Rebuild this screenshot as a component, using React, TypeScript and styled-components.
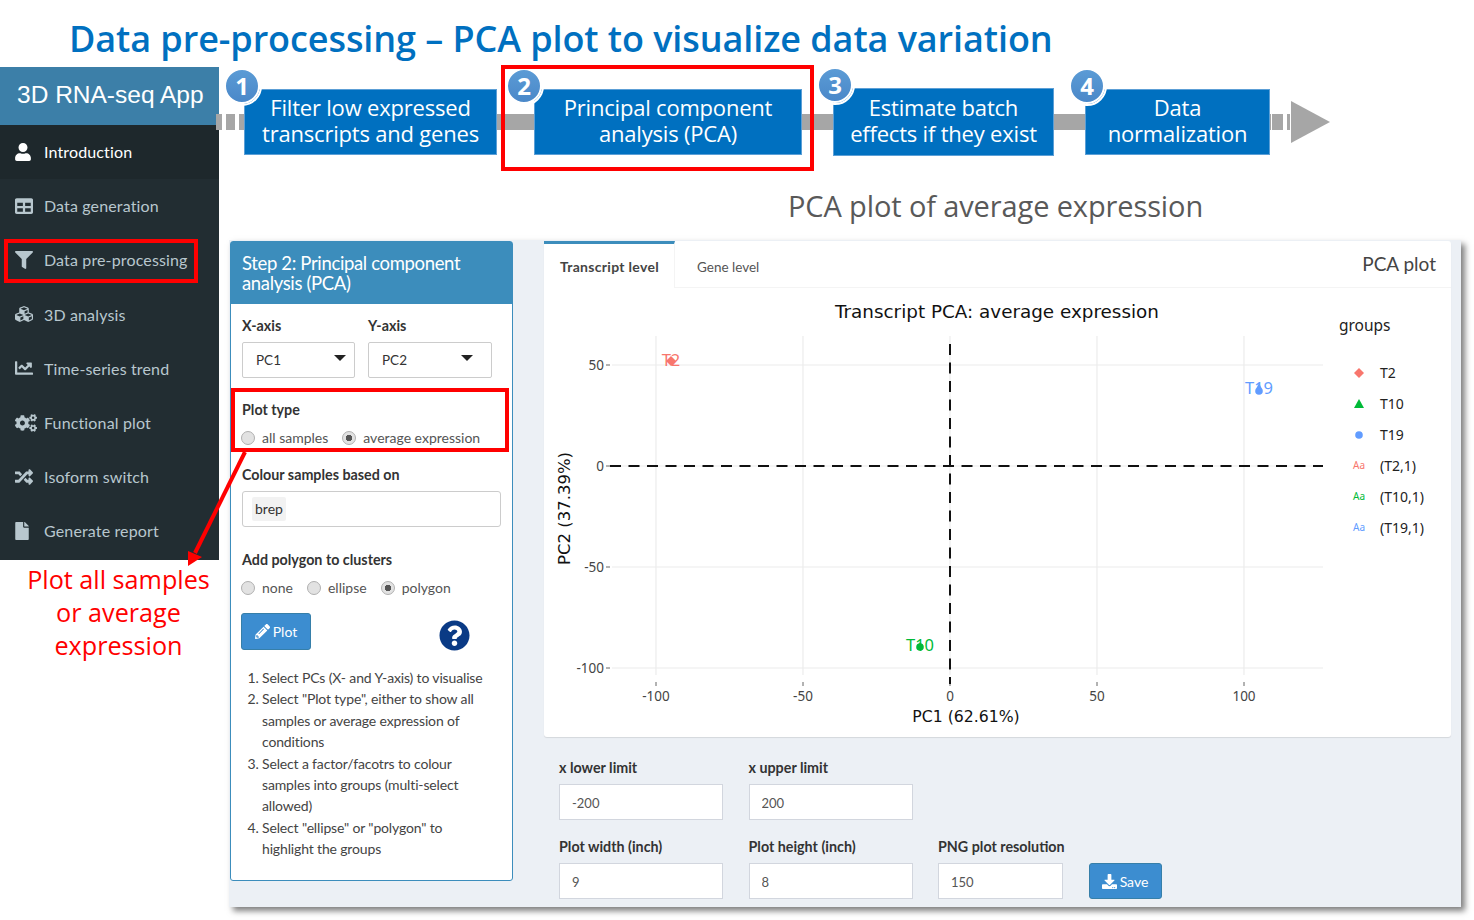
import React from "react";
import styled, { createGlobalStyle } from "styled-components";
import {
  FaChartLine,
  FaCogs,
  FaCubes,
  FaDownload,
  FaFile,
  FaFilter,
  FaPencilAlt,
  FaQuestionCircle,
  FaRandom,
  FaTable,
  FaUser,
} from "react-icons/fa";

const GlobalStyle = createGlobalStyle`
  html, body {
    margin: 0;
    padding: 0;
    background: #ffffff;
  }
  * {
    box-sizing: border-box;
  }
`;

const appFont = `"Lato", "Noto Sans", sans-serif`;
const slideFont = `"Open Sans", "Noto Sans", sans-serif`;
const plotFont = `"Noto Sans", "DejaVu Sans", sans-serif`;
const plotTitleFont = `"DejaVu Sans", "Noto Sans", sans-serif`;

const Page = styled.div`
  position: relative;
  width: 1474px;
  height: 920px;
  overflow: hidden;
  background: #ffffff;
  font-family: ${appFont};
`;

const Title = styled.h1`
  margin: 0;
  height: 67px;
  padding: 15px 0 0 69px;
  font-family: ${slideFont};
  font-size: 36px;
  line-height: 48px;
  font-weight: 600;
  letter-spacing: -0.08px;
  color: #0070c0;
  white-space: nowrap;
`;

const Main = styled.div`
  display: flex;
`;

const LeftColumn = styled.div`
  width: 219px;
  flex: none;
`;

const Sidebar = styled.nav`
  height: 493px;
  background: #222d32;
`;

const Brand = styled.div`
  height: 58px;
  padding-left: 17px;
  background: #3c7fa8;
  color: #ffffff;
  font-family: "Liberation Sans", Arial, sans-serif;
  font-size: 24.5px;
  line-height: 55px;
  white-space: nowrap;
`;

const NavItem = styled.div<{ $active?: boolean }>`
  display: flex;
  align-items: center;
  gap: 11px;
  height: 54.2px;
  padding: 0 0 1px 15px;
  font-size: 16px;
  letter-spacing: 0.14px;
  color: ${(p) => (p.$active ? "#ffffff" : "#b8c7ce")};
  background: ${(p) => (p.$active ? "#1e282c" : "transparent")};
  white-space: nowrap;
`;

const NavIcon = styled.span<{ $iconWidth: number }>`
  display: flex;
  width: 18px;
  flex: none;

  svg {
    width: ${(p) => p.$iconWidth}px;
    height: 18px;
    flex: none;
  }
`;

const Caption = styled.p`
  margin: 3px 0 0;
  padding-left: 18px;
  font-family: ${slideFont};
  font-size: 25.2px;
  line-height: 33px;
  color: #ff0000;
  text-align: center;
  white-space: nowrap;
`;

const RightColumn = styled.div`
  flex: 1;
  min-width: 0;
`;

const Strip = styled.div`
  position: relative;
  display: flex;
  height: 119px;
  padding: 22px 0 0 25px;
`;

const Track = styled.svg`
  position: absolute;
  left: -4px;
  top: 30px;
`;

const StepBox = styled.div<{ $width: number; $gap: number; $tall?: boolean }>`
  position: relative;
  display: flex;
  align-items: center;
  justify-content: center;
  width: ${(p) => p.$width}px;
  height: ${(p) => (p.$tall ? 68 : 66)}px;
  margin-top: ${(p) => (p.$tall ? -1 : 0)}px;
  margin-right: ${(p) => p.$gap}px;
  padding-bottom: 4px;
  background: #0070c0;
  box-shadow: inset 0 0 0 1px #5c9fd6;
  color: #ffffff;
  font-family: ${slideFont};
  font-size: 22px;
  line-height: 26px;
  letter-spacing: -0.2px;
  text-align: center;
  white-space: pre-line;
`;

const StepNumber = styled.div<{ $left: number }>`
  position: absolute;
  left: ${(p) => p.$left}px;
  top: -21px;
  width: 36px;
  height: 36px;
  border-radius: 50%;
  border: 2px solid #ffffff;
  outline: 2px solid #ffffff;
  background: linear-gradient(180deg, #5b9bd5, #4a88c9);
  font-size: 24px;
  line-height: 31px;
  font-weight: 700;
  letter-spacing: 0;
  text-align: center;
`;

const Highlight = styled.div<{ $top: number; $left: number; $w: number; $h: number }>`
  position: absolute;
  top: ${(p) => p.$top}px;
  left: ${(p) => p.$left}px;
  width: ${(p) => p.$w}px;
  height: ${(p) => p.$h}px;
  border: 4px solid #ff0000;
  z-index: 3;
  pointer-events: none;
`;

const PointerArrow = styled.svg`
  position: absolute;
  left: 180px;
  top: 449px;
  z-index: 3;
`;

const Heading = styled.h2`
  margin: 0;
  height: 54px;
  padding-left: 569px;
  font-family: ${slideFont};
  font-size: 29px;
  line-height: 40px;
  font-weight: 400;
  letter-spacing: -0.12px;
  color: #595959;
  white-space: nowrap;
`;

const Dashboard = styled.div`
  display: flex;
  align-items: flex-start;
  gap: 31px;
  width: 1232px;
  height: 667px;
  margin-left: 10px;
  padding: 1px 0 0 1px;
  background: #ecf0f5;
  box-shadow: 4px 4px 6px rgba(0, 0, 0, 0.5);
`;

const ControlBox = styled.section`
  width: 283px;
  height: 640px;
  flex: none;
  background: #ffffff;
  border: 1px solid #3c8dbc;
  border-radius: 3px;
  color: #444444;
`;

const BoxHeader = styled.header`
  height: 62px;
  padding: 11px 11px 0;
  background: #3c8dbc;
  color: #ffffff;
  font-size: 18.5px;
  line-height: 20px;
  letter-spacing: -0.35px;
`;

const BoxBody = styled.div`
  position: relative;
  display: flex;
  flex-direction: column;
  padding: 12px 11px 0;
`;

const FieldRow = styled.div`
  display: flex;
  gap: 13px;
`;

const Field = styled.div<{ $width?: number; $top?: number }>`
  width: ${(p) => (p.$width ? `${p.$width}px` : "auto")};
  margin-top: ${(p) => p.$top ?? 0}px;
`;

const FieldLabel = styled.div`
  font-size: 14.3px;
  line-height: 20px;
  font-weight: 700;
  color: #333333;
  white-space: nowrap;
`;

const SelectBox = styled.div<{ $caretRight: number }>`
  position: relative;
  height: 36px;
  margin-top: 6px;
  padding-left: 13px;
  border: 1px solid #cccccc;
  border-radius: 2px;
  font-size: 13.5px;
  line-height: 34px;
  color: #333333;

  &::after {
    content: "";
    position: absolute;
    right: ${(p) => p.$caretRight}px;
    top: 12px;
    border-left: 6px solid transparent;
    border-right: 6px solid transparent;
    border-top: 6px solid #222222;
  }
`;

const RadioGroup = styled.div`
  display: flex;
  gap: 14px;
  margin: 8px 0 0 -1px;
  height: 20px;
`;

const RadioLabel = styled.label`
  display: flex;
  align-items: center;
  gap: 7px;
  font-size: 14px;
  line-height: 20px;
  color: #555555;
  white-space: nowrap;
`;

const RadioInput = styled.input.attrs({ type: "radio", readOnly: true })`
  appearance: none;
  width: 14px;
  height: 14px;
  margin: 0;
  border-radius: 50%;
  border: 1px solid #b0b0b0;
  background: #e2e2e2;

  &:checked {
    background: radial-gradient(circle, #555555 0 3px, #e2e2e2 3.5px);
  }
`;

const TagInput = styled.div`
  height: 36px;
  width: 259px;
  margin-top: 6px;
  padding: 5px 9px;
  border: 1px solid #cccccc;
  border-radius: 3px;
`;

const Tag = styled.span`
  display: inline-block;
  height: 24px;
  padding: 0 3px;
  border-radius: 2px;
  background: #f2f2f2;
  font-size: 14px;
  line-height: 24px;
  color: #333333;
`;

const ActionButton = styled.button`
  display: inline-flex;
  align-items: center;
  justify-content: center;
  gap: 3px;
  height: 36px;
  padding: 0;
  border: 1px solid #367fa9;
  border-radius: 3px;
  background: #3c8dd0;
  color: #ffffff;
  font-family: ${appFont};
  font-size: 14px;

  svg {
    width: 15px;
    height: 15px;
  }
`;

const PlotButton = styled(ActionButton)`
  width: 70px;
  height: 37px;
`;

const ButtonRow = styled.div`
  display: flex;
  align-items: center;
  justify-content: space-between;
  width: 229px;
  height: 37px;
  margin: 15px 0 0 -1px;
`;

const HelpIcon = styled(FaQuestionCircle)`
  width: 31px;
  height: 31px;
  margin-top: 7px;
  color: #0a3a85;
`;

const Steps = styled.ol`
  width: 249px;
  margin: 17px 0 0 -1px;
  padding: 0 0 0 21px;
  font-size: 14px;
  line-height: 21.4px;
  letter-spacing: -0.15px;
  color: #444444;
`;

const ContentColumn = styled.div`
  width: 907px;
  flex: none;
`;

const PlotCard = styled.section`
  height: 496px;
  background: #ffffff;
  border-radius: 3px;
  box-shadow: 0 1px 1px rgba(0, 0, 0, 0.1);
`;

const TabBar = styled.div`
  display: flex;
  height: 47px;
  border-bottom: 1px solid #f4f4f4;
`;

const Tab = styled.div<{ $active?: boolean }>`
  flex: none;
  width: ${(p) => (p.$active ? "131px" : "auto")};
  height: ${(p) => (p.$active ? "47px" : "46px")};
  padding: ${(p) => (p.$active ? "13px 0 0 16px" : "16px 22px 0")};
  border-top: ${(p) => (p.$active ? "3px solid #3c8dbc" : "none")};
  border-right: ${(p) => (p.$active ? "1px solid #f4f4f4" : "none")};
  background: #ffffff;
  font-size: ${(p) => (p.$active ? "14px" : "13.5px")};
  letter-spacing: ${(p) => (p.$active ? "0.3px" : "0")};
  line-height: 20px;
  font-weight: ${(p) => (p.$active ? 700 : 400)};
  color: ${(p) => (p.$active ? "#444444" : "#555555")};
  white-space: nowrap;
`;

const TabTitle = styled.div`
  margin-left: auto;
  padding: 11px 15px 0 0;
  font-size: 19px;
  line-height: 24px;
  color: #444444;
`;

const PlotFrame = styled.svg`
  display: block;
  font-family: ${plotFont};
`;

const PlotTitleText = styled.text`
  font-family: ${plotTitleFont};
  fill: #111111;
`;

const LimitsForm = styled.form`
  display: flex;
  flex-direction: column;
  gap: 17px;
  padding: 21px 0 0 15px;
`;

const FormRow = styled.div`
  display: flex;
  align-items: flex-end;
  gap: 25.5px;
`;

const NumberInput = styled.input`
  display: block;
  width: 100%;
  height: 36px;
  margin-top: 6px;
  padding: 1px 12px 0;
  border: 1px solid #d2d6de;
  background: #ffffff;
  font-family: ${appFont};
  font-size: 13px;
  color: #555555;
`;

const SaveButton = styled(ActionButton)`
  width: 73px;
`;

const navItems = [
  { label: "Introduction", icon: <FaUser />, iconWidth: 16, active: true },
  { label: "Data generation", icon: <FaTable />, iconWidth: 18 },
  { label: "Data pre-processing", icon: <FaFilter />, iconWidth: 18 },
  { label: "3D analysis", icon: <FaCubes />, iconWidth: 18 },
  { label: "Time-series trend", icon: <FaChartLine />, iconWidth: 18 },
  { label: "Functional plot", icon: <FaCogs />, iconWidth: 22 },
  { label: "Isoform switch", icon: <FaRandom />, iconWidth: 18 },
  { label: "Generate report", icon: <FaFile />, iconWidth: 14 },
];

const stepList = [
  { text: "Filter low expressed\ntranscripts and genes", width: 253, gap: 37, numberLeft: -20 },
  { text: "Principal component\nanalysis (PCA)", width: 268, gap: 31, numberLeft: -28, marked: true },
  { text: "Estimate batch\neffects if they exist", width: 221, gap: 31, numberLeft: -16, tall: true },
  { text: "Data\nnormalization", width: 185, gap: 0, numberLeft: -16 },
];

const xTicks = [
  { x: 656, label: "-100" },
  { x: 803, label: "-50" },
  { x: 950, label: "0" },
  { x: 1097, label: "50" },
  { x: 1244, label: "100" },
];

const yTicks = [
  { y: 365, label: "50" },
  { y: 466, label: "0" },
  { y: 567, label: "-50" },
  { y: 668, label: "-100" },
];

const RED = "#F8766D";
const GREEN = "#00BA38";
const BLUE = "#619CFF";

const groupLegend = [
  { y: 373, label: "T2", color: RED, shape: "diamond" },
  { y: 404, label: "T10", color: GREEN, shape: "triangle" },
  { y: 435, label: "T19", color: BLUE, shape: "circle" },
  { y: 466, label: "(T2,1)", color: RED },
  { y: 497, label: "(T10,1)", color: GREEN },
  { y: 528, label: "(T19,1)", color: BLUE },
];

const marker = (shape: string | undefined, x: number, y: number, color: string, size = 5) => {
  if (shape === "diamond") {
    return <polygon points={`${x},${y - size} ${x + size},${y} ${x},${y + size} ${x - size},${y}`} fill={color} />;
  }
  if (shape === "triangle") {
    return <polygon points={`${x},${y - size} ${x + size},${y + 4} ${x - size},${y + 4}`} fill={color} />;
  }
  return <circle cx={x} cy={y} r={3.8} fill={color} />;
};

const PcaPlot = () => (
  <PlotFrame width="906" height="449" viewBox="544 288 906 449">
    <PlotTitleText x="997" y="318" textAnchor="middle" fontSize="18.35">
      Transcript PCA: average expression
    </PlotTitleText>

    {xTicks.map((t) => (
      <g key={t.x}>
        <line x1={t.x} x2={t.x} y1="336" y2="675" stroke="#ececec" strokeWidth="1.2" />
        <line x1={t.x} x2={t.x} y1="682" y2="686" stroke="#666" />
        <text x={t.x} y="701" textAnchor="middle" fontSize="13.5" fill="#444">
          {t.label}
        </text>
      </g>
    ))}
    {yTicks.map((t) => (
      <g key={t.y}>
        <line x1="612" x2="1323" y1={t.y} y2={t.y} stroke="#ececec" strokeWidth="1.2" />
        <line x1="606" x2="610" y1={t.y} y2={t.y} stroke="#666" />
        <text x="604" y={t.y + 5} textAnchor="end" fontSize="13.5" fill="#444">
          {t.label}
        </text>
      </g>
    ))}

    <line x1="610" x2="1323" y1="466" y2="466" stroke="#111" strokeWidth="2" strokeDasharray="11 7.5" />
    <line x1="950" x2="950" y1="344" y2="684" stroke="#111" strokeWidth="2" strokeDasharray="11 7.5" />

    <text x="671" y="366" textAnchor="middle" fontSize="16.5" fill={RED}>T2</text>
    {marker("diamond", 671, 361, RED)}
    <text x="1259" y="394" textAnchor="middle" fontSize="16.5" fill={BLUE}>T19</text>
    {marker("circle", 1259, 391, BLUE)}
    <path d="M1259 383 l2.5 5 h-5 z" fill={BLUE} />
    <text x="920" y="651" textAnchor="middle" fontSize="16.5" fill={GREEN}>T10</text>
    {marker("circle", 920, 647, GREEN)}
    {marker("triangle", 920, 645, GREEN, 3)}

    <PlotTitleText x="966" y="722" textAnchor="middle" fontSize="15.7">PC1 (62.61%)</PlotTitleText>
    <PlotTitleText transform="translate(570 508.5) rotate(-90)" textAnchor="middle" fontSize="16.5">
      PC2 (37.39%)
    </PlotTitleText>

    <text x="1339" y="331" fontSize="15.5" fill="#222">groups</text>
    {groupLegend.map((g) => (
      <g key={g.label}>
        {g.shape ? (
          marker(g.shape, 1359, g.y, g.color)
        ) : (
          <text x="1359" y={g.y + 3} textAnchor="middle" fontSize="10" fill={g.color}>Aa</text>
        )}
        <text x="1380" y={g.y + 5} fontSize="14" fill="#222">{g.label}</text>
      </g>
    ))}
  </PlotFrame>
);

const App = () => {
  return (
    <Page>
      <GlobalStyle />
      <Title>Data pre-processing – PCA plot to visualize data variation</Title>
      <Main>
        <LeftColumn>
          <Sidebar>
            <Brand>3D RNA-seq App</Brand>
            {navItems.map((item) => (
              <NavItem key={item.label} $active={item.active}>
                <NavIcon $iconWidth={item.iconWidth}>{item.icon}</NavIcon>
                {item.label}
              </NavItem>
            ))}
          </Sidebar>
          <Caption>
            Plot all samples
            <br />
            or average
            <br />
            expression
          </Caption>
        </LeftColumn>

        <RightColumn>
          <Strip>
            <Track width="1120" height="48">
              <g fill="#a6a6a6">
                <rect x="1" y="17" width="6" height="16" />
                <rect x="11" y="17" width="9" height="16" />
                <rect x="24" y="17" width="1032" height="16" />
                <rect x="1057" y="17" width="11" height="16" />
                <rect x="1072" y="17" width="3" height="16" />
                <polygon points="1076,4 1115,25 1076,46" />
              </g>
            </Track>
            {stepList.map((step, i) => (
              <StepBox key={step.text} $width={step.width} $gap={step.gap} $tall={step.tall}>
                <StepNumber $left={step.numberLeft}>{i + 1}</StepNumber>
                {step.text}
                {step.marked && <Highlight $top={-24} $left={-33} $w={313} $h={106} />}
              </StepBox>
            ))}
          </Strip>
          <Heading>PCA plot of average expression</Heading>

          <Dashboard>
            <ControlBox>
              <BoxHeader>
                Step 2: Principal component
                <br />
                analysis (PCA)
              </BoxHeader>
              <BoxBody>
                <FieldRow>
                  <Field $width={113}>
                    <FieldLabel>X-axis</FieldLabel>
                    <SelectBox $caretRight={8}>PC1</SelectBox>
                  </Field>
                  <Field $width={124}>
                    <FieldLabel>Y-axis</FieldLabel>
                    <SelectBox $caretRight={18}>PC2</SelectBox>
                  </Field>
                </FieldRow>

                <Field $top={22}>
                  <FieldLabel>Plot type</FieldLabel>
                  <RadioGroup>
                    <RadioLabel><RadioInput name="type" />all samples</RadioLabel>
                    <RadioLabel><RadioInput name="type" defaultChecked />average expression</RadioLabel>
                  </RadioGroup>
                </Field>

                <Field $top={17}>
                  <FieldLabel>Colour samples based on</FieldLabel>
                  <TagInput><Tag>brep</Tag></TagInput>
                </Field>

                <Field $top={23}>
                  <FieldLabel>Add polygon to clusters</FieldLabel>
                  <RadioGroup>
                    <RadioLabel><RadioInput name="poly" />none</RadioLabel>
                    <RadioLabel><RadioInput name="poly" />ellipse</RadioLabel>
                    <RadioLabel><RadioInput name="poly" defaultChecked />polygon</RadioLabel>
                  </RadioGroup>
                </Field>

                <ButtonRow>
                  <PlotButton type="button"><FaPencilAlt />Plot</PlotButton>
                  <HelpIcon />
                </ButtonRow>

                <Steps>
                  <li>Select PCs (X- and Y-axis) to visualise</li>
                  <li>Select "Plot type", either to show all samples or average expression of conditions</li>
                  <li>Select a factor/facotrs to colour samples into groups (multi-select allowed)</li>
                  <li>Select "ellipse" or "polygon" to highlight the groups</li>
                </Steps>
              </BoxBody>
            </ControlBox>

            <ContentColumn>
              <PlotCard>
                <TabBar>
                  <Tab $active>Transcript level</Tab>
                  <Tab>Gene level</Tab>
                  <TabTitle>PCA plot</TabTitle>
                </TabBar>
                <PcaPlot />
              </PlotCard>

              <LimitsForm>
                <FormRow>
                  <Field $width={164}>
                    <FieldLabel>x lower limit</FieldLabel>
                    <NumberInput defaultValue="-200" />
                  </Field>
                  <Field $width={164}>
                    <FieldLabel>x upper limit</FieldLabel>
                    <NumberInput defaultValue="200" />
                  </Field>
                </FormRow>
                <FormRow>
                  <Field $width={164}>
                    <FieldLabel>Plot width (inch)</FieldLabel>
                    <NumberInput defaultValue="9" />
                  </Field>
                  <Field $width={164}>
                    <FieldLabel>Plot height (inch)</FieldLabel>
                    <NumberInput defaultValue="8" />
                  </Field>
                  <Field $width={125}>
                    <FieldLabel>PNG plot resolution</FieldLabel>
                    <NumberInput defaultValue="150" />
                  </Field>
                  <SaveButton type="button"><FaDownload />Save</SaveButton>
                </FormRow>
              </LimitsForm>
            </ContentColumn>
          </Dashboard>
        </RightColumn>
      </Main>

      <Highlight $top={239} $left={4} $w={194} $h={44} />
      <Highlight $top={388} $left={231} $w={278} $h={64} />
      <PointerArrow viewBox="0 0 80 130" width="80" height="130">
        <line x1="65" y1="3" x2="15" y2="104" stroke="#ff0000" strokeWidth="4" />
        <polygon points="8,117 8,102 22,108" fill="#ff0000" />
      </PointerArrow>
    </Page>
  );
};

export default App;
